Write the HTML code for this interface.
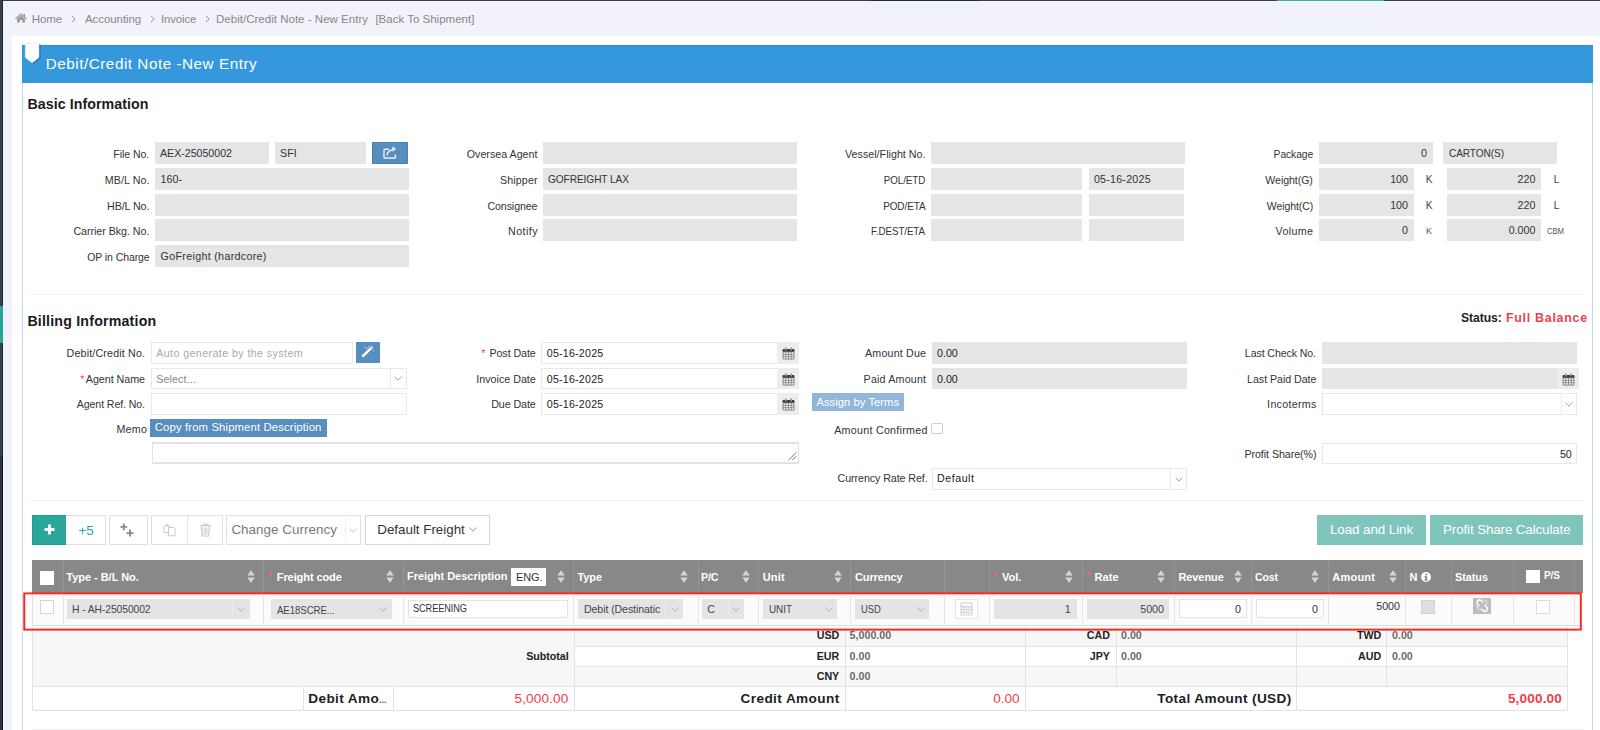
<!DOCTYPE html>
<html><head><meta charset="utf-8"><title>Debit/Credit Note - New Entry</title>
<style>
html,body{margin:0;padding:0;}
body{width:1600px;height:730px;overflow:hidden;position:relative;background:#f1f2fa;font-family:"Liberation Sans", sans-serif;}
.a{position:absolute;}
.t{position:absolute;white-space:pre;font-family:"Liberation Sans", sans-serif;}
svg{position:absolute;overflow:visible;}
</style></head><body>
<div class="a" style="left:0px;top:0px;width:1600px;height:1px;background:#364150;"></div>
<div class="a" style="left:1277px;top:0px;width:107px;height:1px;background:#3aae9f;"></div>
<div class="a" style="left:870px;top:0px;width:110px;height:1px;background:#1d2c45;"></div>
<div class="a" style="left:0px;top:0px;width:2px;height:455px;background:#364150;"></div>
<div class="a" style="left:2px;top:0px;width:1px;height:455px;background:#1b2939;"></div>
<div class="a" style="left:0px;top:455px;width:2px;height:275px;background:#2b3240;"></div>
<div class="a" style="left:2px;top:455px;width:1px;height:275px;background:#0c192b;"></div>
<div class="a" style="left:0px;top:306px;width:3px;height:37px;background:#26a69a;"></div>
<div class="a" style="left:12px;top:36px;width:1588px;height:694px;background:#ffffff;"></div>
<div class="a" style="left:22px;top:45px;width:1px;height:685px;background:#b9daf3;"></div>
<div class="a" style="left:1592px;top:45px;width:1px;height:685px;background:#b9daf3;"></div>
<div class="a" style="left:22px;top:45px;width:1571px;height:38px;background:#3598dc;"></div>
<div class="a" style="left:22px;top:45px;width:1571px;height:1px;background:#2a8fd6;"></div>
<svg style="left:24px;top:42px" width="20" height="24" viewBox="0 0 20 24"><path d="M2.6 2.5 H16.6 V16.2 L9.4 22.3 L2.6 16.2 Z" fill="#1f6db0" fill-opacity="0.85"/><path d="M1.2 1.3 H15 V15.6 L8.1 21 L1.2 15.6 Z" fill="#ffffff" stroke="#d9d9d9" stroke-width="0.5"/></svg>
<svg style="left:14.7px;top:13.3px" width="12" height="10" viewBox="0 0 12 10"><path d="M6 0.2 L0 5.4 L0.9 6.2 L6 1.9 L11.1 6.2 L12 5.4 Z" fill="#9a9a9a"/><path d="M2 5.9 L6 2.5 L10 5.9 V9.4 H7.3 V6.9 H4.7 V9.4 H2 Z" fill="#9a9a9a"/><rect x="8.5" y="0.9" width="1.6" height="3.2" fill="#9a9a9a"/></svg>
<span class="t" style="top:13.77px;font-size:11.5px;line-height:11.5px;color:#888;letter-spacing:-0.080px;left:31.7px;">Home</span>
<svg style="left:70.5px;top:15.3px" width="5" height="8" viewBox="0 0 5 8"><path d="M0.6 0.6 L4.2 4 L0.6 7.4" fill="none" stroke="#999" stroke-width="1"/></svg>
<svg style="left:150.0px;top:15.3px" width="5" height="8" viewBox="0 0 5 8"><path d="M0.6 0.6 L4.2 4 L0.6 7.4" fill="none" stroke="#999" stroke-width="1"/></svg>
<svg style="left:205.0px;top:15.3px" width="5" height="8" viewBox="0 0 5 8"><path d="M0.6 0.6 L4.2 4 L0.6 7.4" fill="none" stroke="#999" stroke-width="1"/></svg>
<span class="t" style="top:13.77px;font-size:11.5px;line-height:11.5px;color:#888;letter-spacing:-0.080px;left:85px;">Accounting</span>
<span class="t" style="top:13.77px;font-size:11.5px;line-height:11.5px;color:#888;letter-spacing:-0.080px;left:160.7px;transform:scaleX(0.9817);transform-origin:left center;">Invoice</span>
<span class="t" style="top:13.77px;font-size:11.5px;line-height:11.5px;color:#888;letter-spacing:0.019px;left:216px;">Debit/Credit Note - New Entry</span>
<span class="t" style="top:13.77px;font-size:11.5px;line-height:11.5px;color:#888;letter-spacing:0.007px;left:375.4px;">[Back To Shipment]</span>
<span class="t" style="top:55.85px;font-size:15.3px;line-height:15.3px;color:#ffffff;letter-spacing:0.510px;left:45.7px;">Debit/Credit Note -New Entry</span>
<span class="t" style="top:97.28px;font-size:14.2px;line-height:14.2px;color:#1a1a1a;font-weight:700;letter-spacing:0.073px;left:27.5px;">Basic Information</span>
<span class="t" style="top:148.94px;font-size:10.7px;line-height:10.7px;color:#333;letter-spacing:-0.080px;right:1450.68px;transform:scaleX(0.9926);transform-origin:right center;">File No.</span>
<div class="a" style="left:155px;top:142px;width:114px;height:22px;background:#e5e5e5;"></div>
<span class="t" style="top:148.44px;font-size:10.7px;line-height:10.7px;color:#333;letter-spacing:-0.045px;left:160px;">AEX-25050002</span>
<div class="a" style="left:275px;top:142px;width:91px;height:22px;background:#e5e5e5;"></div>
<span class="t" style="top:148.44px;font-size:10.7px;line-height:10.7px;color:#333;left:280px;">SFI</span>
<div class="a" style="left:372px;top:142px;width:36px;height:22px;background:#578ebe;border:1px solid #4a80b2;box-sizing:border-box;"></div>
<svg style="left:383px;top:145px" width="14" height="14" viewBox="0 0 14 14"><path d="M6 4.2 H1.8 Q1 4.2 1 5 V12.2 Q1 13 1.8 13 H11.6 Q12.4 13 12.4 12.2 V9.6" fill="none" stroke="#e8eef6" stroke-width="1.4"/><path d="M3.8 10.2 Q5 5.4 10.5 4.2" fill="none" stroke="#e8eef6" stroke-width="1.5"/><path d="M9.4 1.2 L13.2 4 L9.6 6.8 Z" fill="#e8eef6"/></svg>
<span class="t" style="top:174.94px;font-size:10.7px;line-height:10.7px;color:#333;letter-spacing:0.063px;right:1450.54px;">MB/L No.</span>
<div class="a" style="left:155px;top:168px;width:254px;height:22px;background:#e5e5e5;"></div>
<span class="t" style="top:174.44px;font-size:10.7px;line-height:10.7px;color:#333;left:160.6px;">160-</span>
<span class="t" style="top:200.94px;font-size:10.7px;line-height:10.7px;color:#333;letter-spacing:-0.080px;right:1450.68px;">HB/L No.</span>
<div class="a" style="left:155px;top:194px;width:254px;height:22px;background:#e5e5e5;"></div>
<span class="t" style="top:225.94px;font-size:10.7px;line-height:10.7px;color:#333;letter-spacing:-0.042px;right:1450.64px;">Carrier Bkg. No.</span>
<div class="a" style="left:155px;top:219px;width:254px;height:22px;background:#e5e5e5;"></div>
<span class="t" style="top:251.94px;font-size:10.7px;line-height:10.7px;color:#333;letter-spacing:-0.080px;right:1450.68px;transform:scaleX(0.9814);transform-origin:right center;">OP in Charge</span>
<div class="a" style="left:155px;top:245px;width:254px;height:22px;background:#e5e5e5;"></div>
<span class="t" style="top:251.44px;font-size:10.7px;line-height:10.7px;color:#333;letter-spacing:0.316px;left:160.6px;">GoFreight (hardcore)</span>
<span class="t" style="top:148.94px;font-size:10.7px;line-height:10.7px;color:#333;letter-spacing:0.004px;right:1062.50px;">Oversea Agent</span>
<span class="t" style="top:174.94px;font-size:10.7px;line-height:10.7px;color:#333;letter-spacing:0.109px;right:1062.39px;">Shipper</span>
<span class="t" style="top:200.94px;font-size:10.7px;line-height:10.7px;color:#333;letter-spacing:-0.080px;right:1062.58px;transform:scaleX(0.9907);transform-origin:right center;">Consignee</span>
<span class="t" style="top:225.94px;font-size:10.7px;line-height:10.7px;color:#333;letter-spacing:0.434px;right:1062.07px;">Notify</span>
<div class="a" style="left:543px;top:142px;width:254px;height:22px;background:#e5e5e5;"></div>
<div class="a" style="left:543px;top:168px;width:254px;height:22px;background:#e5e5e5;"></div>
<div class="a" style="left:543px;top:194px;width:254px;height:22px;background:#e5e5e5;"></div>
<div class="a" style="left:543px;top:219px;width:254px;height:22px;background:#e5e5e5;"></div>
<span class="t" style="top:174.44px;font-size:10.7px;line-height:10.7px;color:#333;letter-spacing:-0.080px;left:548.25px;transform:scaleX(0.9468);transform-origin:left center;">GOFREIGHT LAX</span>
<span class="t" style="top:148.94px;font-size:10.7px;line-height:10.7px;color:#333;letter-spacing:0.019px;right:674.48px;">Vessel/Flight No.</span>
<span class="t" style="top:174.94px;font-size:10.7px;line-height:10.7px;color:#333;letter-spacing:-0.080px;right:674.58px;transform:scaleX(0.9170);transform-origin:right center;">POL/ETD</span>
<span class="t" style="top:200.94px;font-size:10.7px;line-height:10.7px;color:#333;letter-spacing:-0.080px;right:674.58px;transform:scaleX(0.9311);transform-origin:right center;">POD/ETA</span>
<span class="t" style="top:225.94px;font-size:10.7px;line-height:10.7px;color:#333;letter-spacing:-0.080px;right:674.58px;transform:scaleX(0.9143);transform-origin:right center;">F.DEST/ETA</span>
<div class="a" style="left:931px;top:142px;width:254px;height:22px;background:#e5e5e5;"></div>
<div class="a" style="left:931px;top:168px;width:151px;height:22px;background:#e5e5e5;"></div>
<div class="a" style="left:1089px;top:168px;width:95px;height:22px;background:#e5e5e5;"></div>
<div class="a" style="left:931px;top:194px;width:151px;height:22px;background:#e5e5e5;"></div>
<div class="a" style="left:1089px;top:194px;width:95px;height:22px;background:#e5e5e5;"></div>
<div class="a" style="left:931px;top:219px;width:151px;height:22px;background:#e5e5e5;"></div>
<div class="a" style="left:1089px;top:219px;width:95px;height:22px;background:#e5e5e5;"></div>
<span class="t" style="top:174.44px;font-size:10.7px;line-height:10.7px;color:#333;letter-spacing:0.225px;left:1093.9px;">05-16-2025</span>
<span class="t" style="top:148.94px;font-size:10.7px;line-height:10.7px;color:#333;letter-spacing:-0.080px;right:287.08px;transform:scaleX(0.9607);transform-origin:right center;">Package</span>
<span class="t" style="top:174.94px;font-size:10.7px;line-height:10.7px;color:#333;letter-spacing:-0.080px;right:287.08px;transform:scaleX(0.9922);transform-origin:right center;">Weight(G)</span>
<span class="t" style="top:200.94px;font-size:10.7px;line-height:10.7px;color:#333;letter-spacing:-0.080px;right:287.08px;transform:scaleX(0.9838);transform-origin:right center;">Weight(C)</span>
<span class="t" style="top:225.94px;font-size:10.7px;line-height:10.7px;color:#333;letter-spacing:0.369px;right:286.63px;">Volume</span>
<div class="a" style="left:1319px;top:142px;width:114px;height:22px;background:#e5e5e5;"></div>
<span class="t" style="top:148.44px;font-size:10.7px;line-height:10.7px;color:#333;right:173.00px;">0</span>
<div class="a" style="left:1443px;top:142px;width:114px;height:22px;background:#e5e5e5;"></div>
<span class="t" style="top:148.44px;font-size:10.7px;line-height:10.7px;color:#333;letter-spacing:-0.080px;left:1448.5px;transform:scaleX(0.9427);transform-origin:left center;">CARTON(S)</span>
<div class="a" style="left:1319px;top:168px;width:95px;height:22px;background:#e5e5e5;"></div>
<span class="t" style="top:174.44px;font-size:10.7px;line-height:10.7px;color:#333;right:192.00px;">100</span>
<div class="a" style="left:1447px;top:168px;width:94px;height:22px;background:#e5e5e5;"></div>
<span class="t" style="top:174.44px;font-size:10.7px;line-height:10.7px;color:#333;right:64.60px;">220</span>
<div class="a" style="left:1319px;top:194px;width:95px;height:22px;background:#e5e5e5;"></div>
<span class="t" style="top:200.44px;font-size:10.7px;line-height:10.7px;color:#333;right:192.00px;">100</span>
<div class="a" style="left:1447px;top:194px;width:94px;height:22px;background:#e5e5e5;"></div>
<span class="t" style="top:200.44px;font-size:10.7px;line-height:10.7px;color:#333;right:64.60px;">220</span>
<div class="a" style="left:1319px;top:219px;width:95px;height:22px;background:#e5e5e5;"></div>
<span class="t" style="top:225.44px;font-size:10.7px;line-height:10.7px;color:#333;right:192.00px;">0</span>
<div class="a" style="left:1447px;top:219px;width:94px;height:22px;background:#e5e5e5;"></div>
<span class="t" style="top:225.44px;font-size:10.7px;line-height:10.7px;color:#333;right:64.60px;">0.000</span>
<span class="t" style="top:174.87px;font-size:10.2px;line-height:10.2px;color:#444;left:1425.7px;">K</span>
<span class="t" style="top:174.87px;font-size:10.2px;line-height:10.2px;color:#444;left:1553.7px;">L</span>
<span class="t" style="top:200.87px;font-size:10.2px;line-height:10.2px;color:#444;left:1425.7px;">K</span>
<span class="t" style="top:200.87px;font-size:10.2px;line-height:10.2px;color:#444;left:1553.7px;">L</span>
<span class="t" style="top:226.88px;font-size:9px;line-height:9px;color:#555;left:1426px;">K</span>
<span class="t" style="top:226.88px;font-size:9px;line-height:9px;color:#555;letter-spacing:-0.080px;left:1547.3px;transform:scaleX(0.8569);transform-origin:left center;">CBM</span>
<div class="a" style="left:31px;top:294px;width:1553px;height:1px;background:#efefef;"></div>
<span class="t" style="top:314.18px;font-size:14.2px;line-height:14.2px;color:#1a1a1a;font-weight:700;letter-spacing:0.194px;left:27.4px;">Billing Information</span>
<span class="t" style="top:312.10px;font-size:12.4px;line-height:12.4px;color:#222;font-weight:700;letter-spacing:-0.080px;left:1461px;transform:scaleX(0.9827);transform-origin:left center;">Status:</span>
<span class="t" style="top:312.10px;font-size:12.4px;line-height:12.4px;color:#e8434f;font-weight:700;letter-spacing:0.745px;left:1505.9px;">Full Balance</span>
<span class="t" style="top:348.24px;font-size:10.7px;line-height:10.7px;color:#333;letter-spacing:0.158px;right:1454.84px;">Debit/Credit No.</span>
<div class="a" style="left:151px;top:342px;width:202px;height:21.5px;background:#fff;border:1px solid #e8e8e8;box-sizing:border-box;"></div>
<span class="t" style="top:347.94px;font-size:10.7px;line-height:10.7px;color:#a9a9a9;letter-spacing:0.402px;left:156.2px;">Auto generate by the system</span>
<div class="a" style="left:355.8px;top:342px;width:24.4px;height:21px;background:#578ebe;"></div>
<svg style="left:361px;top:345px" width="14" height="14" viewBox="0 0 14 14"><path d="M1.3 11.6 L9.6 3.6" stroke="#fff" stroke-width="2.6" stroke-linecap="butt"/><path d="M9.6 3.6 L11.4 1.9" stroke="#fff" stroke-width="2.6"/><rect x="10" y="2.6" width="0.9" height="0.9" fill="#578ebe"/><g fill="#fff"><circle cx="3.7" cy="2.2" r="0.5"/><circle cx="5.7" cy="3.2" r="0.6"/><circle cx="7.5" cy="1.4" r="0.5"/><circle cx="12.4" cy="5.8" r="0.5"/></g></svg>
<span class="t" style="top:373.74px;font-size:10.7px;line-height:10.7px;color:#333;letter-spacing:-0.025px;right:1455.02px;">Agent Name</span>
<span class="t" style="top:373.74px;font-size:10.7px;line-height:10.7px;color:#e7505a;left:80.3px;">*</span>
<div class="a" style="left:151px;top:367.5px;width:255.5px;height:21.5px;background:#fff;border:1px solid #e8e8e8;box-sizing:border-box;"></div>
<div class="a" style="left:389.5px;top:367.5px;width:1px;height:21.5px;background:#e9e9e9;"></div>
<span class="t" style="top:373.74px;font-size:10.7px;line-height:10.7px;color:#888;letter-spacing:0.134px;left:156.2px;">Select...</span>
<svg style="left:394.0px;top:376.0px" width="8.0" height="5.0" viewBox="0 0 8 5"><path d="M0.5 0.6 L4 4.2 L7.5 0.6" fill="none" stroke="#999" stroke-width="0.9"/></svg>
<span class="t" style="top:399.24px;font-size:10.7px;line-height:10.7px;color:#333;letter-spacing:-0.080px;right:1455.08px;transform:scaleX(0.9889);transform-origin:right center;">Agent Ref. No.</span>
<div class="a" style="left:151px;top:393px;width:255.5px;height:21.8px;background:#fff;border:1px solid #e8e8e8;box-sizing:border-box;"></div>
<span class="t" style="top:423.84px;font-size:10.7px;line-height:10.7px;color:#333;letter-spacing:0.299px;right:1452.70px;">Memo</span>
<div class="a" style="left:150px;top:419px;width:177px;height:17.7px;background:#578ebe;"></div>
<span class="t" style="top:421.93px;font-size:11.3px;line-height:11.3px;color:#fff;letter-spacing:0.137px;left:154.8px;">Copy from Shipment Description</span>
<div class="a" style="left:152px;top:442px;width:647px;height:21.5px;background:#fff;border:1px solid #e3e3e3;box-sizing:border-box;border-top-width:2px;border-bottom-width:2px;"></div>
<svg style="left:787px;top:451px" width="10" height="10" viewBox="0 0 10 10"><path d="M1.5 9.2 L9.2 1.5 M5.2 9.2 L9.2 5.2" stroke="#666" stroke-width="0.9"/></svg>
<span class="t" style="top:348.24px;font-size:10.7px;line-height:10.7px;color:#333;letter-spacing:-0.080px;right:1064.33px;">Post Date</span>
<span class="t" style="top:348.24px;font-size:10.7px;line-height:10.7px;color:#e7505a;left:481.25px;">*</span>
<span class="t" style="top:373.74px;font-size:10.7px;line-height:10.7px;color:#333;letter-spacing:0.007px;right:1064.24px;">Invoice Date</span>
<span class="t" style="top:399.24px;font-size:10.7px;line-height:10.7px;color:#333;letter-spacing:-0.080px;right:1064.33px;">Due Date</span>
<div class="a" style="left:541px;top:342px;width:258px;height:21.6px;background:#fff;border:1px solid #e8e8e8;box-sizing:border-box;"></div>
<div class="a" style="left:777px;top:342px;width:22px;height:21.6px;background:#ededed;"></div>
<svg style="left:782px;top:347px" width="13" height="13" viewBox="0 0 13 13"><rect x="0.6" y="2" width="11.8" height="10.6" rx="1.3" fill="#777"/><rect x="0.6" y="2" width="11.8" height="2.6" rx="1" fill="#3c3c3c"/><g fill="#f4f4f4"><rect x="1.5" y="5.3" width="1.9" height="1.7"/><rect x="4.2" y="5.3" width="1.9" height="1.7"/><rect x="6.9" y="5.3" width="1.9" height="1.7"/><rect x="9.6" y="5.3" width="1.9" height="1.7"/><rect x="1.5" y="7.7" width="1.9" height="1.7"/><rect x="4.2" y="7.7" width="1.9" height="1.7"/><rect x="6.9" y="7.7" width="1.9" height="1.7"/><rect x="9.6" y="7.7" width="1.9" height="1.7"/><rect x="1.5" y="10.1" width="1.9" height="1.6"/><rect x="4.2" y="10.1" width="1.9" height="1.6"/><rect x="6.9" y="10.1" width="1.9" height="1.6"/><rect x="9.6" y="10.1" width="1.9" height="1.6"/></g><rect x="3" y="0.2" width="1.7" height="3.4" rx="0.85" fill="#999"/><rect x="8.3" y="0.2" width="1.7" height="3.4" rx="0.85" fill="#999"/></svg>
<span class="t" style="top:348.14px;font-size:10.7px;line-height:10.7px;color:#222;letter-spacing:0.203px;left:546.75px;">05-16-2025</span>
<div class="a" style="left:541px;top:367.5px;width:258px;height:21.6px;background:#fff;border:1px solid #e8e8e8;box-sizing:border-box;"></div>
<div class="a" style="left:777px;top:367.5px;width:22px;height:21.6px;background:#ededed;"></div>
<svg style="left:782px;top:372.5px" width="13" height="13" viewBox="0 0 13 13"><rect x="0.6" y="2" width="11.8" height="10.6" rx="1.3" fill="#777"/><rect x="0.6" y="2" width="11.8" height="2.6" rx="1" fill="#3c3c3c"/><g fill="#f4f4f4"><rect x="1.5" y="5.3" width="1.9" height="1.7"/><rect x="4.2" y="5.3" width="1.9" height="1.7"/><rect x="6.9" y="5.3" width="1.9" height="1.7"/><rect x="9.6" y="5.3" width="1.9" height="1.7"/><rect x="1.5" y="7.7" width="1.9" height="1.7"/><rect x="4.2" y="7.7" width="1.9" height="1.7"/><rect x="6.9" y="7.7" width="1.9" height="1.7"/><rect x="9.6" y="7.7" width="1.9" height="1.7"/><rect x="1.5" y="10.1" width="1.9" height="1.6"/><rect x="4.2" y="10.1" width="1.9" height="1.6"/><rect x="6.9" y="10.1" width="1.9" height="1.6"/><rect x="9.6" y="10.1" width="1.9" height="1.6"/></g><rect x="3" y="0.2" width="1.7" height="3.4" rx="0.85" fill="#999"/><rect x="8.3" y="0.2" width="1.7" height="3.4" rx="0.85" fill="#999"/></svg>
<span class="t" style="top:373.64px;font-size:10.7px;line-height:10.7px;color:#222;letter-spacing:0.203px;left:546.75px;">05-16-2025</span>
<div class="a" style="left:541px;top:393px;width:258px;height:21.6px;background:#fff;border:1px solid #e8e8e8;box-sizing:border-box;"></div>
<div class="a" style="left:777px;top:393px;width:22px;height:21.6px;background:#ededed;"></div>
<svg style="left:782px;top:398px" width="13" height="13" viewBox="0 0 13 13"><rect x="0.6" y="2" width="11.8" height="10.6" rx="1.3" fill="#777"/><rect x="0.6" y="2" width="11.8" height="2.6" rx="1" fill="#3c3c3c"/><g fill="#f4f4f4"><rect x="1.5" y="5.3" width="1.9" height="1.7"/><rect x="4.2" y="5.3" width="1.9" height="1.7"/><rect x="6.9" y="5.3" width="1.9" height="1.7"/><rect x="9.6" y="5.3" width="1.9" height="1.7"/><rect x="1.5" y="7.7" width="1.9" height="1.7"/><rect x="4.2" y="7.7" width="1.9" height="1.7"/><rect x="6.9" y="7.7" width="1.9" height="1.7"/><rect x="9.6" y="7.7" width="1.9" height="1.7"/><rect x="1.5" y="10.1" width="1.9" height="1.6"/><rect x="4.2" y="10.1" width="1.9" height="1.6"/><rect x="6.9" y="10.1" width="1.9" height="1.6"/><rect x="9.6" y="10.1" width="1.9" height="1.6"/></g><rect x="3" y="0.2" width="1.7" height="3.4" rx="0.85" fill="#999"/><rect x="8.3" y="0.2" width="1.7" height="3.4" rx="0.85" fill="#999"/></svg>
<span class="t" style="top:399.14px;font-size:10.7px;line-height:10.7px;color:#222;letter-spacing:0.203px;left:546.75px;">05-16-2025</span>
<span class="t" style="top:348.24px;font-size:10.7px;line-height:10.7px;color:#333;letter-spacing:0.175px;right:673.82px;">Amount Due</span>
<span class="t" style="top:373.74px;font-size:10.7px;line-height:10.7px;color:#333;letter-spacing:0.179px;right:673.82px;">Paid Amount</span>
<div class="a" style="left:932px;top:342px;width:255px;height:21.8px;background:#e5e5e5;"></div>
<span class="t" style="top:348.14px;font-size:10.7px;line-height:10.7px;color:#222;left:937px;">0.00</span>
<div class="a" style="left:932px;top:367.5px;width:255px;height:21.6px;background:#e5e5e5;"></div>
<span class="t" style="top:373.64px;font-size:10.7px;line-height:10.7px;color:#222;left:937px;">0.00</span>
<div class="a" style="left:812px;top:393px;width:92px;height:18px;background:#92b6d9;"></div>
<span class="t" style="top:396.73px;font-size:11.3px;line-height:11.3px;color:#fff;letter-spacing:0.009px;left:816.4px;">Assign by Terms</span>
<span class="t" style="top:425.14px;font-size:10.7px;line-height:10.7px;color:#333;letter-spacing:0.273px;right:672.33px;">Amount Confirmed</span>
<div class="a" style="left:931px;top:422.7px;width:11.5px;height:11.5px;background:#fff;border:1px solid #d0d0d0;box-sizing:border-box;border-radius:2px;"></div>
<span class="t" style="top:473.14px;font-size:10.7px;line-height:10.7px;color:#333;letter-spacing:-0.080px;right:672.38px;">Currency Rate Ref.</span>
<div class="a" style="left:931.5px;top:468px;width:255.5px;height:21.8px;background:#fff;border:1px solid #e8e8e8;box-sizing:border-box;"></div>
<div class="a" style="left:1170px;top:468px;width:1px;height:21.8px;background:#e9e9e9;"></div>
<span class="t" style="top:473.34px;font-size:10.7px;line-height:10.7px;color:#222;letter-spacing:0.521px;left:937px;">Default</span>
<svg style="left:1174.5px;top:476.5px" width="8.0" height="5.0" viewBox="0 0 8 5"><path d="M0.5 0.6 L4 4.2 L7.5 0.6" fill="none" stroke="#999" stroke-width="0.9"/></svg>
<span class="t" style="top:348.24px;font-size:10.7px;line-height:10.7px;color:#333;letter-spacing:-0.080px;right:283.68px;transform:scaleX(0.9884);transform-origin:right center;">Last Check No.</span>
<span class="t" style="top:373.74px;font-size:10.7px;line-height:10.7px;color:#333;letter-spacing:-0.062px;right:283.66px;">Last Paid Date</span>
<span class="t" style="top:399.24px;font-size:10.7px;line-height:10.7px;color:#333;letter-spacing:0.297px;right:283.30px;">Incoterms</span>
<span class="t" style="top:448.94px;font-size:10.7px;line-height:10.7px;color:#333;letter-spacing:-0.062px;right:283.46px;">Profit Share(%)</span>
<div class="a" style="left:1322px;top:342px;width:255px;height:21.8px;background:#e5e5e5;"></div>
<div class="a" style="left:1322px;top:367.5px;width:257px;height:21.6px;background:#e5e5e5;"></div>
<div class="a" style="left:1557.5px;top:367.5px;width:21.5px;height:21.6px;background:#ededed;"></div>
<svg style="left:1562px;top:372.5px" width="13" height="13" viewBox="0 0 13 13"><rect x="0.6" y="2" width="11.8" height="10.6" rx="1.3" fill="#777"/><rect x="0.6" y="2" width="11.8" height="2.6" rx="1" fill="#3c3c3c"/><g fill="#f4f4f4"><rect x="1.5" y="5.3" width="1.9" height="1.7"/><rect x="4.2" y="5.3" width="1.9" height="1.7"/><rect x="6.9" y="5.3" width="1.9" height="1.7"/><rect x="9.6" y="5.3" width="1.9" height="1.7"/><rect x="1.5" y="7.7" width="1.9" height="1.7"/><rect x="4.2" y="7.7" width="1.9" height="1.7"/><rect x="6.9" y="7.7" width="1.9" height="1.7"/><rect x="9.6" y="7.7" width="1.9" height="1.7"/><rect x="1.5" y="10.1" width="1.9" height="1.6"/><rect x="4.2" y="10.1" width="1.9" height="1.6"/><rect x="6.9" y="10.1" width="1.9" height="1.6"/><rect x="9.6" y="10.1" width="1.9" height="1.6"/></g><rect x="3" y="0.2" width="1.7" height="3.4" rx="0.85" fill="#999"/><rect x="8.3" y="0.2" width="1.7" height="3.4" rx="0.85" fill="#999"/></svg>
<div class="a" style="left:1322px;top:393px;width:255px;height:21.5px;background:#fff;border:1px solid #e8e8e8;box-sizing:border-box;"></div>
<div class="a" style="left:1561px;top:393px;width:1px;height:21.5px;background:#e9e9e9;"></div>
<svg style="left:1565.0px;top:401.5px" width="8.0" height="5.0" viewBox="0 0 8 5"><path d="M0.5 0.6 L4 4.2 L7.5 0.6" fill="none" stroke="#999" stroke-width="0.9"/></svg>
<div class="a" style="left:1322px;top:442.5px;width:255px;height:21.5px;background:#fff;border:1px solid #e8e8e8;box-sizing:border-box;"></div>
<span class="t" style="top:448.54px;font-size:10.7px;line-height:10.7px;color:#222;right:28.20px;">50</span>
<div class="a" style="left:31px;top:500px;width:1553px;height:1px;background:#efefef;"></div>
<div class="a" style="left:31.5px;top:515px;width:35px;height:30px;background:#2ba69a;border:1px solid #1f9c8f;box-sizing:border-box;"></div>
<svg style="left:43.5px;top:524px" width="11" height="11" viewBox="0 0 11 11"><path d="M5.5 0.5 V10.5 M0.5 5.5 H10.5" stroke="#fff" stroke-width="3"/></svg>
<div class="a" style="left:66px;top:515px;width:40px;height:30px;background:#fff;border:1px solid #e0e0e0;box-sizing:border-box;border-left:none;"></div>
<span class="t" style="top:523.74px;font-size:13.3px;line-height:13.3px;color:#2ba69a;left:78.41px;">+5</span>
<div class="a" style="left:108.5px;top:515px;width:39.5px;height:30px;background:#fff;border:1px solid #e0e0e0;box-sizing:border-box;"></div>
<svg style="left:120px;top:523px" width="15" height="15" viewBox="0 0 15 15"><path d="M3.8 0.5 V7.3 M0.4 3.9 H7.2" stroke="#8c8c8c" stroke-width="1.9"/><path d="M10 6.6 V13.6 M6.5 10.1 H13.5" stroke="#8c8c8c" stroke-width="1.9"/></svg>
<div class="a" style="left:151px;top:515px;width:72px;height:30px;background:#fff;border:1px solid #e0e0e0;box-sizing:border-box;"></div>
<div class="a" style="left:187px;top:515px;width:1px;height:30px;background:#e6e6e6;"></div>
<svg style="left:163px;top:523px" width="13" height="14" viewBox="0 0 13 14"><path d="M1 4.5 Q1 2.5 3 2.5 H6.2 V9.5 H1 Z" fill="none" stroke="#c8c8c8" stroke-width="1"/><path d="M5.5 4.5 H10.5 Q12 4.5 12 6 V12.8 H5.5 Z" fill="#fff" stroke="#c8c8c8" stroke-width="1"/><path d="M4 1 L6.5 3.5" stroke="#c8c8c8" stroke-width="1"/></svg>
<svg style="left:200px;top:523px" width="11" height="14" viewBox="0 0 11 14"><path d="M0.5 2.6 H10.5" stroke="#c8c8c8" stroke-width="1.2"/><path d="M3.6 2.5 V1 H7.4 V2.5" fill="none" stroke="#c8c8c8" stroke-width="1"/><path d="M1.6 3.2 L2.2 13 H8.8 L9.4 3.2" fill="none" stroke="#c8c8c8" stroke-width="1.2"/><path d="M4 4.5 V11.5 M5.5 4.5 V11.5 M7 4.5 V11.5" stroke="#c8c8c8" stroke-width="0.8"/></svg>
<div class="a" style="left:226px;top:515px;width:134.6px;height:30.4px;background:#fff;border:1px solid #e0e0e0;box-sizing:border-box;"></div>
<div class="a" style="left:344.5px;top:518px;width:1px;height:24px;background:#eeeeee;"></div>
<span class="t" style="top:523.46px;font-size:13.4px;line-height:13.4px;color:#7a7a7a;letter-spacing:0.046px;left:231.4px;">Change Currency</span>
<svg style="left:348.5px;top:527.5px" width="8.0" height="5.0" viewBox="0 0 8 5"><path d="M0.5 0.6 L4 4.2 L7.5 0.6" fill="none" stroke="#c0c0c0" stroke-width="0.9"/></svg>
<div class="a" style="left:364.5px;top:515px;width:125.2px;height:29.6px;background:#fff;border:1px solid #d4d4d4;box-sizing:border-box;"></div>
<span class="t" style="top:523.46px;font-size:13.4px;line-height:13.4px;color:#333;letter-spacing:-0.023px;left:377.3px;">Default Freight</span>
<svg style="left:468.8px;top:527.0px" width="8.0" height="5.0" viewBox="0 0 8 5"><path d="M0.5 0.6 L4 4.2 L7.5 0.6" fill="none" stroke="#888" stroke-width="0.9"/></svg>
<div class="a" style="left:1317.3px;top:514.8px;width:108.4px;height:30.2px;background:#7fc5bb;"></div>
<span class="t" style="top:523.26px;font-size:13.4px;line-height:13.4px;color:#fff;letter-spacing:-0.080px;left:1330px;">Load and Link</span>
<div class="a" style="left:1429.5px;top:514.8px;width:153.8px;height:30.2px;background:#7fc5bb;"></div>
<span class="t" style="top:523.26px;font-size:13.4px;line-height:13.4px;color:#fff;letter-spacing:-0.080px;left:1442.6px;transform:scaleX(0.9923);transform-origin:left center;">Profit Share Calculate</span>
<div class="a" style="left:32px;top:560px;width:1551px;height:33px;background:#888888;"></div>
<div class="a" style="left:62.5px;top:560px;width:1px;height:33px;background:#959595;"></div>
<div class="a" style="left:263.4px;top:560px;width:1px;height:33px;background:#959595;"></div>
<div class="a" style="left:402.5px;top:560px;width:1px;height:33px;background:#959595;"></div>
<div class="a" style="left:573px;top:560px;width:1px;height:33px;background:#959595;"></div>
<div class="a" style="left:697.5px;top:560px;width:1px;height:33px;background:#959595;"></div>
<div class="a" style="left:758.4px;top:560px;width:1px;height:33px;background:#959595;"></div>
<div class="a" style="left:850.4px;top:560px;width:1px;height:33px;background:#959595;"></div>
<div class="a" style="left:943.5px;top:560px;width:1px;height:33px;background:#959595;"></div>
<div class="a" style="left:989.3px;top:560px;width:1px;height:33px;background:#959595;"></div>
<div class="a" style="left:1082.4px;top:560px;width:1px;height:33px;background:#959595;"></div>
<div class="a" style="left:1174.3px;top:560px;width:1px;height:33px;background:#959595;"></div>
<div class="a" style="left:1251.3px;top:560px;width:1px;height:33px;background:#959595;"></div>
<div class="a" style="left:1328.3px;top:560px;width:1px;height:33px;background:#959595;"></div>
<div class="a" style="left:1405px;top:560px;width:1px;height:33px;background:#959595;"></div>
<div class="a" style="left:1451px;top:560px;width:1px;height:33px;background:#959595;"></div>
<div class="a" style="left:1512.5px;top:560px;width:1px;height:33px;background:#959595;"></div>
<div class="a" style="left:1573.8px;top:560px;width:1px;height:33px;background:#959595;"></div>
<div class="a" style="left:40.2px;top:571px;width:13.6px;height:13.6px;background:#fff;"></div>
<span class="t" style="top:572.49px;font-size:11px;line-height:11px;color:#ffffff;font-weight:700;letter-spacing:-0.026px;left:66.25px;">Type - B/L No.</span>
<svg style="left:246.9px;top:569.8px" width="8" height="13" viewBox="0 0 8 13"><path d="M4 0.3 L7.8 5.6 H0.2 Z" fill="#d5d5d5"/><path d="M4 12.7 L7.8 7.4 H0.2 Z" fill="#d5d5d5"/></svg>
<span class="t" style="top:571.49px;font-size:11px;line-height:11px;color:#f0606a;font-weight:700;left:267.5px;">*</span>
<span class="t" style="top:572.49px;font-size:11px;line-height:11px;color:#ffffff;font-weight:700;letter-spacing:-0.080px;left:276.75px;">Freight code</span>
<svg style="left:385.8px;top:569.8px" width="8" height="13" viewBox="0 0 8 13"><path d="M4 0.3 L7.8 5.6 H0.2 Z" fill="#d5d5d5"/><path d="M4 12.7 L7.8 7.4 H0.2 Z" fill="#d5d5d5"/></svg>
<span class="t" style="top:571.49px;font-size:11px;line-height:11px;color:#ffffff;font-weight:700;letter-spacing:-0.019px;left:407px;">Freight Description</span>
<div class="a" style="left:511px;top:567.5px;width:35px;height:18.5px;background:#fff;"></div>
<span class="t" style="top:572.29px;font-size:11px;line-height:11px;color:#333;letter-spacing:-0.080px;left:515.5px;transform:scaleX(0.9938);transform-origin:left center;">ENG.</span>
<svg style="left:556.8px;top:569.8px" width="8" height="13" viewBox="0 0 8 13"><path d="M4 0.3 L7.8 5.6 H0.2 Z" fill="#d5d5d5"/><path d="M4 12.7 L7.8 7.4 H0.2 Z" fill="#d5d5d5"/></svg>
<span class="t" style="top:572.49px;font-size:11px;line-height:11px;color:#ffffff;font-weight:700;letter-spacing:-0.080px;left:577.5px;">Type</span>
<svg style="left:680.2px;top:569.8px" width="8" height="13" viewBox="0 0 8 13"><path d="M4 0.3 L7.8 5.6 H0.2 Z" fill="#d5d5d5"/><path d="M4 12.7 L7.8 7.4 H0.2 Z" fill="#d5d5d5"/></svg>
<span class="t" style="top:572.49px;font-size:11px;line-height:11px;color:#ffffff;font-weight:700;letter-spacing:-0.080px;left:701.3px;transform:scaleX(0.9624);transform-origin:left center;">P/C</span>
<svg style="left:741.5px;top:569.8px" width="8" height="13" viewBox="0 0 8 13"><path d="M4 0.3 L7.8 5.6 H0.2 Z" fill="#d5d5d5"/><path d="M4 12.7 L7.8 7.4 H0.2 Z" fill="#d5d5d5"/></svg>
<span class="t" style="top:572.49px;font-size:11px;line-height:11px;color:#ffffff;font-weight:700;letter-spacing:0.203px;left:762.7px;">Unit</span>
<svg style="left:834.4px;top:569.8px" width="8" height="13" viewBox="0 0 8 13"><path d="M4 0.3 L7.8 5.6 H0.2 Z" fill="#d5d5d5"/><path d="M4 12.7 L7.8 7.4 H0.2 Z" fill="#d5d5d5"/></svg>
<span class="t" style="top:572.49px;font-size:11px;line-height:11px;color:#ffffff;font-weight:700;letter-spacing:-0.071px;left:854.9px;">Currency</span>
<span class="t" style="top:571.49px;font-size:11px;line-height:11px;color:#f0606a;font-weight:700;left:993.2px;">*</span>
<span class="t" style="top:572.49px;font-size:11px;line-height:11px;color:#ffffff;font-weight:700;letter-spacing:0.014px;left:1002px;">Vol.</span>
<svg style="left:1065px;top:569.8px" width="8" height="13" viewBox="0 0 8 13"><path d="M4 0.3 L7.8 5.6 H0.2 Z" fill="#d5d5d5"/><path d="M4 12.7 L7.8 7.4 H0.2 Z" fill="#d5d5d5"/></svg>
<span class="t" style="top:571.49px;font-size:11px;line-height:11px;color:#f0606a;font-weight:700;left:1086px;">*</span>
<span class="t" style="top:572.49px;font-size:11px;line-height:11px;color:#ffffff;font-weight:700;letter-spacing:0.052px;left:1094.5px;">Rate</span>
<svg style="left:1157.2px;top:569.8px" width="8" height="13" viewBox="0 0 8 13"><path d="M4 0.3 L7.8 5.6 H0.2 Z" fill="#d5d5d5"/><path d="M4 12.7 L7.8 7.4 H0.2 Z" fill="#d5d5d5"/></svg>
<span class="t" style="top:572.49px;font-size:11px;line-height:11px;color:#ffffff;font-weight:700;letter-spacing:-0.077px;left:1178.4px;">Revenue</span>
<svg style="left:1234.3px;top:569.8px" width="8" height="13" viewBox="0 0 8 13"><path d="M4 0.3 L7.8 5.6 H0.2 Z" fill="#d5d5d5"/><path d="M4 12.7 L7.8 7.4 H0.2 Z" fill="#d5d5d5"/></svg>
<span class="t" style="top:572.49px;font-size:11px;line-height:11px;color:#ffffff;font-weight:700;letter-spacing:-0.080px;left:1255.2px;transform:scaleX(0.9499);transform-origin:left center;">Cost</span>
<svg style="left:1311.3px;top:569.8px" width="8" height="13" viewBox="0 0 8 13"><path d="M4 0.3 L7.8 5.6 H0.2 Z" fill="#d5d5d5"/><path d="M4 12.7 L7.8 7.4 H0.2 Z" fill="#d5d5d5"/></svg>
<span class="t" style="top:572.49px;font-size:11px;line-height:11px;color:#ffffff;font-weight:700;letter-spacing:0.251px;left:1332.2px;">Amount</span>
<svg style="left:1388.8px;top:569.8px" width="8" height="13" viewBox="0 0 8 13"><path d="M4 0.3 L7.8 5.6 H0.2 Z" fill="#d5d5d5"/><path d="M4 12.7 L7.8 7.4 H0.2 Z" fill="#d5d5d5"/></svg>
<span class="t" style="top:572.49px;font-size:11px;line-height:11px;color:#ffffff;font-weight:700;left:1409.5px;">N</span>
<svg style="left:1420.5px;top:572px" width="10" height="10" viewBox="0 0 10 10"><circle cx="5" cy="5" r="5" fill="#fff"/><rect x="4.2" y="4.2" width="1.8" height="4" fill="#888"/><rect x="3.4" y="4.2" width="1.5" height="1" fill="#888"/><rect x="3.4" y="7.6" width="3.4" height="1" fill="#888"/><circle cx="5.1" cy="2.6" r="1" fill="#888"/></svg>
<span class="t" style="top:572.49px;font-size:11px;line-height:11px;color:#ffffff;font-weight:700;letter-spacing:-0.080px;left:1455px;transform:scaleX(0.9932);transform-origin:left center;">Status</span>
<div class="a" style="left:1526px;top:569.5px;width:13.6px;height:13.6px;background:#fff;"></div>
<span class="t" style="top:569.69px;font-size:11px;line-height:11px;color:#ffffff;font-weight:700;letter-spacing:-0.080px;left:1543.5px;transform:scaleX(0.9104);transform-origin:left center;">P/S</span>
<div class="a" style="left:32px;top:593px;width:1551px;height:33px;background:#fbfbfb;"></div>
<div class="a" style="left:32px;top:593px;width:1px;height:33px;background:#e2e2e2;"></div>
<div class="a" style="left:32px;top:624.7px;width:1551px;height:1.5px;background:#dcdcdc;"></div>
<div class="a" style="left:62.5px;top:596px;width:1px;height:29px;background:#e6e6e6;"></div>
<div class="a" style="left:263.4px;top:596px;width:1px;height:29px;background:#e6e6e6;"></div>
<div class="a" style="left:402.5px;top:596px;width:1px;height:29px;background:#e6e6e6;"></div>
<div class="a" style="left:573px;top:596px;width:1px;height:29px;background:#e6e6e6;"></div>
<div class="a" style="left:697.5px;top:596px;width:1px;height:29px;background:#e6e6e6;"></div>
<div class="a" style="left:758.4px;top:596px;width:1px;height:29px;background:#e6e6e6;"></div>
<div class="a" style="left:850.4px;top:596px;width:1px;height:29px;background:#e6e6e6;"></div>
<div class="a" style="left:943.5px;top:596px;width:1px;height:29px;background:#e6e6e6;"></div>
<div class="a" style="left:989.3px;top:596px;width:1px;height:29px;background:#e6e6e6;"></div>
<div class="a" style="left:1082.4px;top:596px;width:1px;height:29px;background:#e6e6e6;"></div>
<div class="a" style="left:1174.3px;top:596px;width:1px;height:29px;background:#e6e6e6;"></div>
<div class="a" style="left:1251.3px;top:596px;width:1px;height:29px;background:#e6e6e6;"></div>
<div class="a" style="left:1328.3px;top:596px;width:1px;height:29px;background:#e6e6e6;"></div>
<div class="a" style="left:1405px;top:596px;width:1px;height:29px;background:#e6e6e6;"></div>
<div class="a" style="left:1451px;top:596px;width:1px;height:29px;background:#e6e6e6;"></div>
<div class="a" style="left:1512.5px;top:596px;width:1px;height:29px;background:#e6e6e6;"></div>
<div class="a" style="left:1573.8px;top:596px;width:1px;height:29px;background:#e6e6e6;"></div>
<div class="a" style="left:40.2px;top:600.3px;width:13.8px;height:13.8px;background:#fff;border:1px solid #d6d6d6;box-sizing:border-box;"></div>
<div class="a" style="left:67px;top:599.2px;width:183px;height:19.6px;background:#e4e4e4;"></div>
<div class="a" style="left:231.6px;top:599.2px;width:1px;height:19.6px;background:#e9e9e9;"></div>
<span class="t" style="top:603.74px;font-size:10.7px;line-height:10.7px;color:#444;letter-spacing:-0.080px;left:72.2px;transform:scaleX(0.9647);transform-origin:left center;">H - AH-25050002</span>
<svg style="left:237.0px;top:607.0px" width="8.0" height="5.0" viewBox="0 0 8 5"><path d="M0.5 0.6 L4 4.2 L7.5 0.6" fill="none" stroke="#aaa" stroke-width="0.9"/></svg>
<div class="a" style="left:271px;top:599.2px;width:120.75px;height:19.6px;background:#e4e4e4;"></div>
<div class="a" style="left:371px;top:599.2px;width:1px;height:19.6px;background:#e9e9e9;"></div>
<span class="t" style="top:605.44px;font-size:10.7px;line-height:10.7px;color:#444;letter-spacing:-0.080px;left:276.75px;transform:scaleX(0.9030);transform-origin:left center;">AE18SCRE...</span>
<svg style="left:378.5px;top:607.0px" width="8.0" height="5.0" viewBox="0 0 8 5"><path d="M0.5 0.6 L4 4.2 L7.5 0.6" fill="none" stroke="#aaa" stroke-width="0.9"/></svg>
<div class="a" style="left:408px;top:599.5px;width:160px;height:18.5px;background:#fff;border:1px solid #e3e3e3;box-sizing:border-box;"></div>
<span class="t" style="top:603.44px;font-size:10.7px;line-height:10.7px;color:#333;letter-spacing:-0.080px;left:413px;transform:scaleX(0.8584);transform-origin:left center;">SCREENING</span>
<div class="a" style="left:578px;top:599.2px;width:105px;height:19.6px;background:#e4e4e4;"></div>
<div class="a" style="left:664px;top:599.2px;width:1px;height:19.6px;background:#e9e9e9;"></div>
<span class="t" style="top:603.74px;font-size:10.7px;line-height:10.7px;color:#444;letter-spacing:-0.080px;left:583.5px;transform:scaleX(0.9886);transform-origin:left center;">Debit (Destinatic</span>
<svg style="left:670.8px;top:607.0px" width="8.0" height="5.0" viewBox="0 0 8 5"><path d="M0.5 0.6 L4 4.2 L7.5 0.6" fill="none" stroke="#aaa" stroke-width="0.9"/></svg>
<div class="a" style="left:702px;top:599.2px;width:42.4px;height:19.6px;background:#e4e4e4;"></div>
<div class="a" style="left:727.5px;top:599.2px;width:1px;height:19.6px;background:#e9e9e9;"></div>
<span class="t" style="top:603.74px;font-size:10.7px;line-height:10.7px;color:#444;left:707.25px;">C</span>
<svg style="left:731.9px;top:607.0px" width="8.0" height="5.0" viewBox="0 0 8 5"><path d="M0.5 0.6 L4 4.2 L7.5 0.6" fill="none" stroke="#aaa" stroke-width="0.9"/></svg>
<div class="a" style="left:763px;top:599.2px;width:73.6px;height:19.6px;background:#e4e4e4;"></div>
<div class="a" style="left:818px;top:599.2px;width:1px;height:19.6px;background:#e9e9e9;"></div>
<span class="t" style="top:603.74px;font-size:10.7px;line-height:10.7px;color:#444;letter-spacing:-0.080px;left:768.6px;transform:scaleX(0.9313);transform-origin:left center;">UNIT</span>
<svg style="left:824.7px;top:607.0px" width="8.0" height="5.0" viewBox="0 0 8 5"><path d="M0.5 0.6 L4 4.2 L7.5 0.6" fill="none" stroke="#aaa" stroke-width="0.9"/></svg>
<div class="a" style="left:855px;top:599.2px;width:74.4px;height:19.6px;background:#e4e4e4;"></div>
<div class="a" style="left:910px;top:599.2px;width:1px;height:19.6px;background:#e9e9e9;"></div>
<span class="t" style="top:603.74px;font-size:10.7px;line-height:10.7px;color:#444;letter-spacing:-0.080px;left:861px;transform:scaleX(0.8832);transform-origin:left center;">USD</span>
<svg style="left:917.2px;top:607.0px" width="8.0" height="5.0" viewBox="0 0 8 5"><path d="M0.5 0.6 L4 4.2 L7.5 0.6" fill="none" stroke="#aaa" stroke-width="0.9"/></svg>
<div class="a" style="left:954.7px;top:599px;width:23.1px;height:19.6px;background:#fff;border:1px solid #e6e6e6;box-sizing:border-box;"></div>
<svg style="left:959.5px;top:601.5px" width="13" height="14" viewBox="0 0 13 14"><rect x="0.4" y="0.4" width="12.2" height="13.2" rx="1.4" fill="#cdcdcd"/><rect x="1.5" y="1.5" width="9.8" height="2.6" fill="#fff"/><g fill="#fafafa"><rect x="1.5" y="5.3" width="2" height="1.9"/><rect x="4.1" y="5.3" width="2" height="1.9"/><rect x="6.7" y="5.3" width="2" height="1.9"/><rect x="1.5" y="8.1" width="2" height="1.9"/><rect x="4.1" y="8.1" width="2" height="1.9"/><rect x="6.7" y="8.1" width="2" height="1.9"/><rect x="1.5" y="10.9" width="2" height="1.9"/><rect x="4.1" y="10.9" width="2" height="1.9"/><rect x="6.7" y="10.9" width="2" height="1.9"/><rect x="9.3" y="5.3" width="2" height="1.9"/><rect x="9.3" y="8.1" width="2" height="4.7"/></g></svg>
<div class="a" style="left:994px;top:599px;width:83px;height:19.6px;background:#e4e4e4;"></div>
<span class="t" style="top:603.74px;font-size:10.7px;line-height:10.7px;color:#444;right:529.40px;">1</span>
<div class="a" style="left:1087px;top:599px;width:82.3px;height:19.6px;background:#e4e4e4;"></div>
<span class="t" style="top:603.74px;font-size:10.7px;line-height:10.7px;color:#444;right:436.00px;">5000</span>
<div class="a" style="left:1179px;top:599px;width:67.6px;height:18.6px;background:#fff;border:1px solid #e3e3e3;box-sizing:border-box;"></div>
<span class="t" style="top:603.94px;font-size:10.7px;line-height:10.7px;color:#333;right:359.00px;">0</span>
<div class="a" style="left:1256px;top:599px;width:67.6px;height:18.6px;background:#fff;border:1px solid #e3e3e3;box-sizing:border-box;"></div>
<span class="t" style="top:603.94px;font-size:10.7px;line-height:10.7px;color:#333;right:282.00px;">0</span>
<span class="t" style="top:601.14px;font-size:10.7px;line-height:10.7px;color:#333;right:200.00px;">5000</span>
<div class="a" style="left:1421px;top:600.3px;width:14px;height:13.6px;background:#dedede;border:1px solid #d2d2d2;box-sizing:border-box;"></div>
<div class="a" style="left:1472.5px;top:598px;width:18.6px;height:16px;background:#bdbdbd;"></div>
<svg style="left:1472.5px;top:598px" width="19" height="16" viewBox="0 0 19 16"><path d="M5.8 7.8 L4.6 6.2 Q3.4 4.2 4.8 2.6 Q6.6 1 8.4 2.8 L9.4 4" fill="none" stroke="#fff" stroke-width="1.5" stroke-linecap="round"/><path d="M12 7 L13.8 9.2 Q15.2 11.2 13.6 12.8 Q11.8 14.2 10 12.4 L9 11.2" fill="none" stroke="#fff" stroke-width="1.5" stroke-linecap="round"/><path d="M11.2 1.6 L11.6 3.6 M13.8 2.4 L12.6 4 M14.8 5.2 L12.8 5.4 M3.4 9 L5.6 9.2 M4 11.8 L5.8 10.6 M7 12.6 L7.2 10.8" stroke="#fff" stroke-width="0.9" stroke-opacity="0.85"/></svg>
<div class="a" style="left:1536px;top:600.3px;width:14px;height:13.8px;background:#fff;border:1px solid #dcdcdc;box-sizing:border-box;"></div>
<div class="a" style="left:32px;top:626.5px;width:1535.5px;height:84.5px;background:#f7f7f7;"></div>
<div class="a" style="left:573.75px;top:646.2px;width:993.75px;height:20.2px;background:#ffffff;"></div>
<div class="a" style="left:32px;top:686.3px;width:1535.5px;height:24.7px;background:#ffffff;"></div>
<div class="a" style="left:32px;top:626.5px;width:1px;height:84.5px;background:#e3e3e3;"></div>
<div class="a" style="left:1567px;top:626.5px;width:1px;height:84.5px;background:#e3e3e3;"></div>
<div class="a" style="left:573.75px;top:646px;width:994px;height:1px;background:#e3e3e3;"></div>
<div class="a" style="left:573.75px;top:666.2px;width:994px;height:1px;background:#e3e3e3;"></div>
<div class="a" style="left:32px;top:686.2px;width:1536px;height:1px;background:#e3e3e3;"></div>
<div class="a" style="left:32px;top:710.3px;width:1536px;height:1px;background:#e3e3e3;"></div>
<div class="a" style="left:573.75px;top:626.5px;width:1px;height:60px;background:#e3e3e3;"></div>
<div class="a" style="left:844.6px;top:626.5px;width:1px;height:60px;background:#e3e3e3;"></div>
<div class="a" style="left:1025.4px;top:626.5px;width:1px;height:60px;background:#e3e3e3;"></div>
<div class="a" style="left:1116.4px;top:626.5px;width:1px;height:60px;background:#e3e3e3;"></div>
<div class="a" style="left:1296.25px;top:626.5px;width:1px;height:60px;background:#e3e3e3;"></div>
<div class="a" style="left:1386.25px;top:626.5px;width:1px;height:60px;background:#e3e3e3;"></div>
<div class="a" style="left:302.5px;top:686.2px;width:1px;height:24.5px;background:#e3e3e3;"></div>
<div class="a" style="left:393.25px;top:686.2px;width:1px;height:24.5px;background:#e3e3e3;"></div>
<div class="a" style="left:573.75px;top:686.2px;width:1px;height:24.5px;background:#e3e3e3;"></div>
<div class="a" style="left:844.6px;top:686.2px;width:1px;height:24.5px;background:#e3e3e3;"></div>
<div class="a" style="left:1025.4px;top:686.2px;width:1px;height:24.5px;background:#e3e3e3;"></div>
<div class="a" style="left:1296.25px;top:686.2px;width:1px;height:24.5px;background:#e3e3e3;"></div>
<div class="a" style="left:32px;top:729px;width:1552px;height:1px;background:#eeeeee;"></div>
<span class="t" style="top:650.94px;font-size:10.7px;line-height:10.7px;color:#222;font-weight:700;letter-spacing:-0.036px;right:1031.29px;">Subtotal</span>
<span class="t" style="top:630.24px;font-size:10.7px;line-height:10.7px;color:#222;font-weight:700;right:760.75px;">USD</span>
<span class="t" style="top:630.24px;font-size:10.7px;line-height:10.7px;color:#6b6b6b;font-weight:700;left:849.6px;">5,000.00</span>
<span class="t" style="top:650.94px;font-size:10.7px;line-height:10.7px;color:#222;font-weight:700;right:760.75px;">EUR</span>
<span class="t" style="top:650.94px;font-size:10.7px;line-height:10.7px;color:#6b6b6b;font-weight:700;left:849.6px;">0.00</span>
<span class="t" style="top:671.44px;font-size:10.7px;line-height:10.7px;color:#222;font-weight:700;right:760.75px;">CNY</span>
<span class="t" style="top:671.44px;font-size:10.7px;line-height:10.7px;color:#6b6b6b;font-weight:700;left:849.6px;">0.00</span>
<span class="t" style="top:630.24px;font-size:10.7px;line-height:10.7px;color:#222;font-weight:700;right:490.00px;">CAD</span>
<span class="t" style="top:630.24px;font-size:10.7px;line-height:10.7px;color:#6b6b6b;font-weight:700;left:1121px;">0.00</span>
<span class="t" style="top:650.94px;font-size:10.7px;line-height:10.7px;color:#222;font-weight:700;right:490.00px;">JPY</span>
<span class="t" style="top:650.94px;font-size:10.7px;line-height:10.7px;color:#6b6b6b;font-weight:700;left:1121px;">0.00</span>
<span class="t" style="top:630.24px;font-size:10.7px;line-height:10.7px;color:#222;font-weight:700;right:218.75px;">TWD</span>
<span class="t" style="top:630.24px;font-size:10.7px;line-height:10.7px;color:#6b6b6b;font-weight:700;left:1392px;">0.00</span>
<span class="t" style="top:650.94px;font-size:10.7px;line-height:10.7px;color:#222;font-weight:700;right:218.75px;">AUD</span>
<span class="t" style="top:650.94px;font-size:10.7px;line-height:10.7px;color:#6b6b6b;font-weight:700;left:1392px;">0.00</span>
<span class="t" style="top:691.79px;font-size:13.6px;line-height:13.6px;color:#1e1e1e;font-weight:700;letter-spacing:0.379px;left:308.25px;">Debit Amo</span>
<span class="t" style="top:695.68px;font-size:9px;line-height:9px;color:#555;font-weight:700;left:379px;">...</span>
<span class="t" style="top:691.79px;font-size:13.6px;line-height:13.6px;color:#ee3e4a;letter-spacing:0.118px;right:1031.63px;">5,000.00</span>
<span class="t" style="top:691.79px;font-size:13.6px;line-height:13.6px;color:#1e1e1e;font-weight:700;letter-spacing:0.405px;right:760.35px;">Credit Amount</span>
<span class="t" style="top:691.79px;font-size:13.6px;line-height:13.6px;color:#ee3e4a;right:580.40px;">0.00</span>
<span class="t" style="top:691.79px;font-size:13.6px;line-height:13.6px;color:#1e1e1e;font-weight:700;letter-spacing:0.376px;right:308.37px;">Total Amount (USD)</span>
<span class="t" style="top:691.79px;font-size:13.6px;line-height:13.6px;color:#ee3e4a;font-weight:700;letter-spacing:0.154px;right:37.95px;">5,000.00</span>
<svg style="left:0;top:0" width="1600" height="730" viewBox="0 0 1600 730"><rect x="24.25" y="593.4" width="1556.55" height="36.25" fill="none" stroke="#ff2418" stroke-width="1.9"/></svg>
</body></html>
